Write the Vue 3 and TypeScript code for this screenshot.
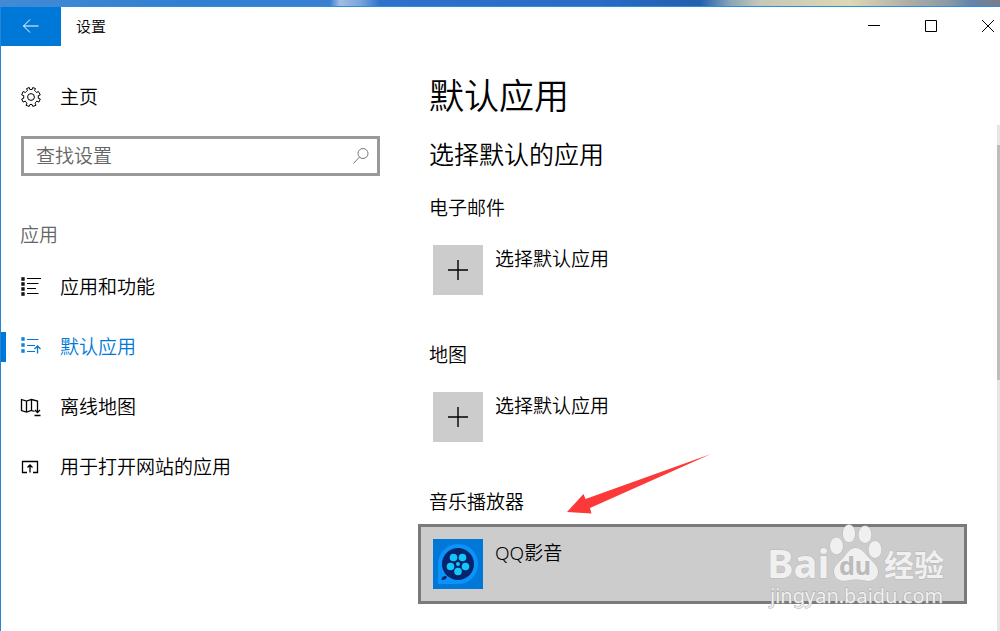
<script setup lang="ts">
import { ref } from 'vue'

interface NavItem {
  id: string
  label: string
}

interface AppGroup {
  id: string
  title: string
  app: string
  chosen: boolean
}

const query = ref<string>('')
const current = ref<string>('defaults')

const navItems: NavItem[] = [
  { id: 'features', label: '应用和功能' },
  { id: 'defaults', label: '默认应用' },
  { id: 'maps', label: '离线地图' },
  { id: 'websites', label: '用于打开网站的应用' },
]

const groups: AppGroup[] = [
  { id: 'mail', title: '电子邮件', app: '选择默认应用', chosen: false },
  { id: 'map', title: '地图', app: '选择默认应用', chosen: false },
  { id: 'music', title: '音乐播放器', app: 'QQ影音', chosen: true },
]
</script>

<template>
  <div class="desktop">
    <div class="window">
      <header class="titlebar">
        <button class="back" type="button" aria-label="返回">
          <svg width="18" height="16" viewBox="0 0 18 16"><path d="M16.500 8H1.500M8 1.500L1.500 8L8 14.500" /></svg>
        </button>
        <span class="caption">设置</span>
        <div class="controls">
          <button type="button" aria-label="最小化">
            <svg width="14" height="14" viewBox="0 0 14 14"><path d="M1 6.500H13" /></svg>
          </button>
          <button type="button" aria-label="最大化">
            <svg width="14" height="14" viewBox="0 0 14 14"><path d="M1.500 1.500H12.500V12.500H1.500Z" /></svg>
          </button>
          <button type="button" aria-label="关闭">
            <svg width="14" height="14" viewBox="0 0 14 14"><path d="M1 1L13 13M13 1L1 13" /></svg>
          </button>
        </div>
      </header>

      <div class="body">
        <aside class="sidebar">
          <a class="home" href="#home">
            <svg class="icon" width="22" height="22" viewBox="0 0 22 22">
              <path d="M9.300 1.500L9.900 3.600Q11 3.300 12.100 3.600L12.700 1.500L15.500 2.600L14.500 4.600Q15.700 5.300 16.400 6.500L18.400 5.500L20.300 8.900L18.200 9.700Q18.500 11 18.200 12.200L20.300 13L18.900 16.100L16.800 15.100Q16.100 16.500 15 17.200L16 19.300L12.800 20.400L12 18.400Q11 18.600 10 18.400L9.200 20.400L6 19.300L7 17.200Q5.900 16.500 5.200 15.100L3.100 16.100L1.700 13L3.800 12.200Q3.500 11 3.800 9.700L1.700 8.900L3.100 5.500L5.400 6.500Q6.300 5.300 7.500 4.600L6.500 2.600Z" />
              <circle cx="11" cy="11" r="3.400" />
            </svg>
            <span>主页</span>
          </a>

          <label class="search">
            <input v-model="query" type="text" placeholder="查找设置" aria-label="查找设置" />
            <svg width="18" height="18" viewBox="0 0 18 18"><circle cx="11" cy="6.500" r="5" /><path d="M7.500 10L1.500 16.500" /></svg>
          </label>

          <h2 class="section">应用</h2>
          <nav>
            <a
              v-for="item in navItems"
              :key="item.id"
              :href="'#' + item.id"
              class="nav-item"
              :class="{ active: item.id === current }"
              @click.prevent="current = item.id"
            >
              <svg v-if="item.id === 'features'" class="icon" width="22" height="22" viewBox="0 0 22 22">
                <path class="strong" d="M2 2h2v2h-2zM2 7h2v2h-2zM2 12h2v2h-2zM2 17h2v2h-2z" />
                <path d="M7 2.500H21M7 7.500H18.500M7 12.500H16M7 17.500H18.500" />
              </svg>
              <svg v-else-if="item.id === 'defaults'" class="icon" width="22" height="22" viewBox="0 0 22 22">
                <path class="strong" d="M2 2h2v2h-2zM2 8h2v2h-2zM2 14h2v2h-2z" />
                <path d="M7 3.500H18.500M7 9.500H15M7 15.500H15" />
                <path class="strong" d="M17.500 17.500V10.500M14.500 13L17.500 10L20.500 13" />
              </svg>
              <svg v-else-if="item.id === 'maps'" class="icon" width="22" height="22" viewBox="0 0 22 22">
                <path class="strong" d="M14.500 15.500L11.500 14.500L6.500 16L1.500 14.500V3.500L6.500 5L11.500 3.500L17.500 5V9M6.500 5V16M11.500 3.500V14.500" />
                <path class="strong" d="M17.500 9V16.500M15 14L17.500 16.500L20 14M14.500 19.500H20.500" />
              </svg>
              <svg v-else class="icon" width="22" height="22" viewBox="0 0 22 22">
                <path class="strong" d="M7 16.500H2.500V5.500H17.500V16.500H13M10 16.500V9M7.500 11.500L10 9L12.500 11.500" />
              </svg>
              <span>{{ item.label }}</span>
            </a>
          </nav>
        </aside>

        <main class="content">
          <h1>默认应用</h1>
          <h2>选择默认的应用</h2>
          <section v-for="group in groups" :key="group.id" class="group">
            <h3>{{ group.title }}</h3>
            <button type="button" class="choice" :class="{ chosen: group.chosen }">
              <span class="tile">
                <svg v-if="group.chosen" width="50" height="50" viewBox="0 0 50 50">
                  <path fill="#0a93fb" d="M5 45V25A20 20 0 1 1 25 45Z" />
                  <circle cx="25" cy="25" r="16" fill="#07246a" />
                  <path fill="#07246a" d="M8.500 41Q8.500 37 13 37L14 38Q12.500 41.500 8.500 41Z" />
                  <g fill="#12c8fb">
                    <circle cx="20.500" cy="18.500" r="3.800" />
                    <circle cx="29.500" cy="18.500" r="3.800" />
                    <circle cx="17.500" cy="27.500" r="3.800" />
                    <circle cx="32.500" cy="27.500" r="3.800" />
                    <circle cx="25" cy="32.500" r="3.800" />
                    <circle cx="25" cy="25" r="2" />
                  </g>
                </svg>
                <svg v-else width="20" height="20" viewBox="0 0 20 20"><path class="plus" d="M10 0V20M0 10H20" /></svg>
              </span>
              <span class="app-name">{{ group.app }}</span>
            </button>

            <template v-if="group.chosen">
              <svg class="arrow" width="146" height="62" viewBox="0 0 146 62" aria-hidden="true">
                <path fill="#fc3838" d="M1 59L17.500 41L19.500 46L145 1L24 55L25.500 60.500Z" />
              </svg>
              <svg class="watermark" width="190" height="96" viewBox="0 0 190 96">
                <g class="mark">
                  <text class="latin" x="6" y="62" font-size="40">Bai</text>
                  <ellipse cx="75.500" cy="30" rx="6.500" ry="8.500" />
                  <ellipse cx="88" cy="17.500" rx="6.200" ry="8.800" />
                  <ellipse cx="104" cy="18.500" rx="6.500" ry="8.500" />
                  <ellipse cx="114" cy="33.500" rx="6.500" ry="8.500" />
                  <path d="M94.500 32C101 32 104 38 109 43C114 48 117 51 117 56C117 63 111 66 104 64.500C98 63 92 63 86 64.500C78 66 73 62 73 55C73 49 79 46 83 41C87 36 89 32 94.500 32Z" />
                  <text class="han" x="123" y="60" font-size="30">经验</text>
                </g>
                <text class="du" x="78" y="59" font-size="25">du</text>
                <text class="url" x="9" y="87" font-size="20">jingyan.baidu.com</text>
              </svg>
            </template>
          </section>
        </main>
        <div class="scrollbar" aria-hidden="true"><div class="thumb"></div></div>
      </div>
    </div>
  </div>
</template>

<style>
body {
  margin: 0;
}
</style>

<style scoped>
.desktop {
  box-sizing: border-box;
  min-height: 100vh;
  padding-top: 6px;
  display: flex;
  background: linear-gradient(90deg, #438ad4 0%, #2f7fd0 20%, #3a80d2 33%, #a3bde0 34%, #7aa5dc 36%, #2f72cd 38%, #286bc8 60%, #2160ac 70%, #88a5b8 73%, #c6c8b8 76%, #ddd7b5 85%, #adada5 91%, #8799a6 95%, #6685ab 97%, #777d84 100%);
  font-family: "Noto Sans", "Noto Sans CJK SC", sans-serif;
  font-weight: 350;
  font-size: 19px;
  line-height: 28px;
  color: #000;
}

.window {
  flex: 1;
  display: flex;
  flex-direction: column;
  border-top: 1px solid #2b90e3;
  border-left: 1px solid #2486d9;
  background: #fff;
}

button {
  border: 0;
  padding: 0;
  background: none;
  font: inherit;
  color: inherit;
}

svg {
  display: block;
  flex: none;
  fill: none;
  stroke: currentColor;
}

h1,
h2,
h3 {
  margin: 0;
  font-weight: 350;
}

.titlebar {
  display: flex;
  align-items: center;
  height: 39px;
  padding-bottom: 1px;
  margin-bottom: -1px;
  box-sizing: border-box;
}

.back {
  display: grid;
  place-items: center;
  width: 60px;
  height: 39px;
  background: #0078d7;
  color: #fff;
}

.caption {
  flex: 1;
  padding-left: 15px;
  font-size: 15px;
}

.controls {
  display: flex;
  gap: 43px;
  padding-right: 5px;
}

.body {
  flex: 1;
  display: flex;
}

.sidebar {
  flex: none;
  width: 379px;
  padding-top: 32px;
}

.home {
  display: flex;
  align-items: center;
  gap: 18px;
  height: 40px;
  padding-left: 19px;
  color: inherit;
  text-decoration: none;
}

.search {
  display: flex;
  align-items: center;
  box-sizing: border-box;
  height: 40px;
  margin: 19px 0 0 20px;
  padding: 0 7px 0 12px;
  border: 3px solid #999;
  color: #777;
}

.search input {
  flex: 1;
  min-width: 0;
  padding: 0;
  border: 0;
  outline: 0;
  background: none;
  font: inherit;
  color: #666;
}

.search input::placeholder {
  color: #666;
  opacity: 1;
}

.section {
  margin: 45px 0 8px;
  padding-left: 19px;
  font-size: 19px;
  color: #666;
}

.nav-item {
  display: flex;
  align-items: center;
  height: 60px;
  color: inherit;
  text-decoration: none;
}

.nav-item::before {
  content: "";
  width: 5px;
  height: 30px;
}

.nav-item .icon {
  margin: 0 18px 0 14px;
}

.nav-item.active {
  color: #0078d7;
}

.nav-item.active::before {
  background: #0078d7;
}

.strong {
  stroke-width: 1.3;
}

.content {
  flex: 1;
  min-width: 0;
  padding: 27px 30px 27px 38px;
}

.content h1 {
  padding-left: 11px;
  font-size: 35px;
  line-height: 48px;
}

.content h2 {
  margin: 14px 0 20px;
  padding-left: 11px;
  font-size: 25px;
  line-height: 40px;
}

.content h3 {
  margin-bottom: 8px;
  padding-left: 11px;
  font-size: 19px;
}

.group {
  position: relative;
}

.group + .group {
  margin-top: 31px;
}

.choice {
  display: flex;
  gap: 12px;
  box-sizing: border-box;
  width: 100%;
  height: 80px;
  padding: 12px;
  border: 3px solid transparent;
  text-align: left;
}

.choice.chosen {
  border-color: #7a7a7a;
  background: #ccc;
}

.tile {
  display: grid;
  place-items: center;
  width: 50px;
  height: 50px;
  background: #ccc;
}

.chosen .tile {
  background: #0078d7;
}

.chosen .tile svg {
  stroke: none;
}

.plus {
  stroke-width: 1.4;
}

.arrow {
  position: absolute;
  top: -35px;
  left: 148px;
  stroke: none;
}

.watermark {
  position: absolute;
  right: 16px;
  bottom: -8px;
  stroke: none;
}

.mark {
  fill: #f0f0f0;
  stroke: #b8b8b8;
  stroke-width: 1;
  paint-order: stroke;
}

.latin,
.du {
  font-family: "Noto Sans", sans-serif;
  font-weight: 700;
}

.du {
  fill: #bbb;
}

.han {
  font-family: "Noto Sans CJK SC", sans-serif;
  font-weight: 700;
}

.url {
  fill: #f0f0f0;
  stroke: #aaa;
  stroke-width: 1;
  paint-order: stroke;
  font-weight: 400;
}

.scrollbar {
  width: 3px;
  margin-top: 80px;
  padding-top: 20px;
  background: #e6e6e6;
}

.thumb {
  height: 235px;
  background: #bdbdbd;
}
</style>
